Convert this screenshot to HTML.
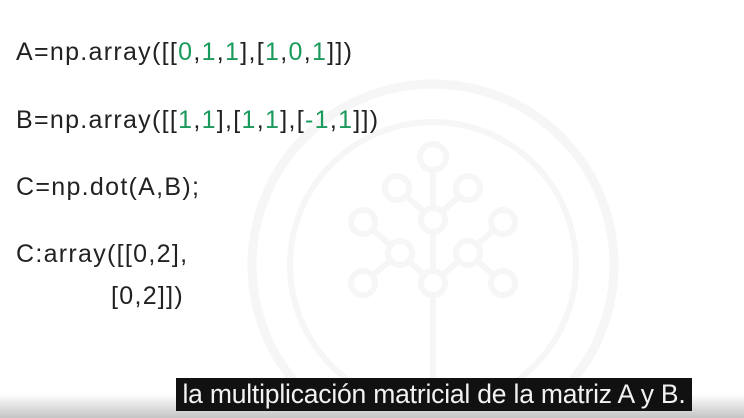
<!DOCTYPE html>
<html><head><meta charset="utf-8"><style>
html,body{margin:0;padding:0;overflow:hidden}
body{width:744px;height:418px;overflow:hidden;background:#fff;position:relative;font-family:"Liberation Sans",sans-serif}
svg{display:block}
.code{position:absolute;left:16px;font-size:25px;color:#222;white-space:pre;letter-spacing:1.3px;line-height:30px}
.g{color:#1a9a5c}
.sub{position:absolute;left:176px;top:378px;width:516px;height:33px;background:#111;color:#f2f2f2;font-size:26.5px;line-height:33px;text-align:center;white-space:nowrap;letter-spacing:-0.2px;overflow:hidden}
.bar{position:absolute;left:0;top:394px;width:744px;height:24px;background:linear-gradient(#fff,#c4c4c4)}
</style></head><body>
<svg width="744" height="418" style="position:absolute;left:0;top:0">
<g fill="none" stroke="#f6f6f6">
<circle cx="433" cy="265" r="181" stroke-width="9"/>
<circle cx="433" cy="265" r="143" stroke-width="6"/>
<g stroke-width="6">
<line x1="433" y1="170" x2="433" y2="418"/>
<line x1="397" y1="188" x2="433" y2="220"/><line x1="468" y1="188" x2="433" y2="220"/>
<line x1="363" y1="222" x2="400" y2="253"/><line x1="503" y1="222" x2="468" y2="253"/>
<line x1="400" y1="253" x2="433" y2="283"/><line x1="468" y1="253" x2="433" y2="283"/>
<line x1="363" y1="283" x2="400" y2="253"/><line x1="503" y1="283" x2="468" y2="253"/>
<g fill="#fff">
<circle cx="433" cy="157" r="13"/><circle cx="397" cy="188" r="12"/><circle cx="468" cy="188" r="12"/>
<circle cx="433" cy="220" r="12"/><circle cx="363" cy="222" r="12"/><circle cx="503" cy="222" r="12"/>
<circle cx="400" cy="253" r="12"/><circle cx="468" cy="253" r="12"/><circle cx="433" cy="283" r="12"/>
<circle cx="363" cy="283" r="12"/><circle cx="503" cy="283" r="12"/>
</g></g></g></svg>
<div class="code" style="top:37px">A=np.array([[<span class="g">0</span>,<span class="g">1</span>,<span class="g">1</span>],[<span class="g">1</span>,<span class="g">0</span>,<span class="g">1</span>]])</div>
<div class="code" style="top:105px">B=np.array([[<span class="g">1</span>,<span class="g">1</span>],[<span class="g">1</span>,<span class="g">1</span>],[<span class="g">-1</span>,<span class="g">1</span>]])</div>
<div class="code" style="top:172px">C=np.dot(A,B);</div>
<div class="code" style="top:239px">C:array([[0,2],</div>
<div class="code" style="top:281px;left:111px">[0,2]])</div>
<div class="bar"></div>
<div class="sub">la multiplicación matricial de la matriz A y B.</div>
</body></html>
